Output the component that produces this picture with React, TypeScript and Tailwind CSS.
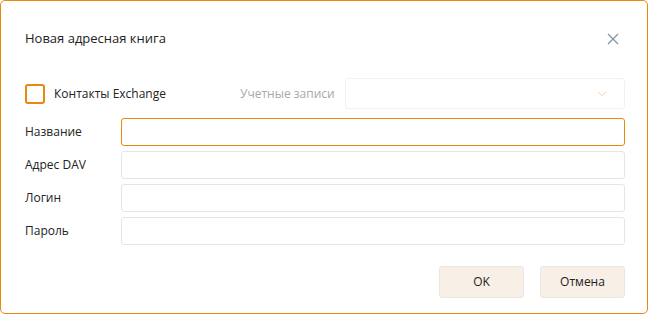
import { ChevronDown } from 'lucide-react'

const fields = ['Название', 'Адрес DAV', 'Логин', 'Пароль']

export default function App() {
  return (
    <div
      className="w-[648px] h-[314px] bg-white border border-[#e8890c] rounded-[5px] flex flex-col text-[12px] text-[#222]"
      style={{ fontFamily: "'Open Sans', 'Noto Sans', sans-serif" }}
    >
      <div className="flex items-center justify-between pl-6 pr-[28px] pt-[25px] h-[50px]">
        <span className="text-[13px]">Новая адресная книга</span>
        <svg width="12" height="12" viewBox="0 0 12 12" className="text-[#8196a6]">
          <path d="M1 1L11 11M11 1L1 11" stroke="currentColor" strokeWidth="1.3" fill="none" />
        </svg>
      </div>

      <div className="flex items-center mt-[27px] pl-6 pr-[22px]">
        <div className="flex items-center w-[215px]">
          <div className="w-5 h-5 border-2 border-[#e8890c] rounded-[3px]" />
          <span className="ml-[9px]">Контакты Exchange</span>
        </div>
        <span className="text-[#a9a9a9] w-[105px]">Учетные записи</span>
        <div className="flex-1 h-[31px] border border-[#f1f1f1] rounded-[3px] flex items-center justify-end pr-[15px]">
          <ChevronDown size={14} strokeWidth={1.5} className="text-[#f5c796]" />
        </div>
      </div>

      <div className="flex flex-col gap-[5px] mt-[9px] pl-6 pr-[22px]">
        {fields.map((label, i) => (
          <div key={label} className="flex items-center">
            <span className="w-[96px]">{label}</span>
            <div
              className={
                i === 0
                  ? 'flex-1 h-[28px] border border-[#e8890c] rounded-[3px]'
                  : 'flex-1 h-[28px] border border-[#e1e6ed] rounded-[3px]'
              }
            />
          </div>
        ))}
      </div>

      <div className="flex justify-end gap-4 mt-[21px] pr-[22px]">
        <button className="w-[85px] h-[32px] bg-[#f8efe6] border border-[#ebe6e0] rounded-[3px] text-[12px]">
          OK
        </button>
        <button className="w-[85px] h-[32px] bg-[#f8efe6] border border-[#ebe6e0] rounded-[3px] text-[12px]">
          Отмена
        </button>
      </div>
    </div>
  )
}
